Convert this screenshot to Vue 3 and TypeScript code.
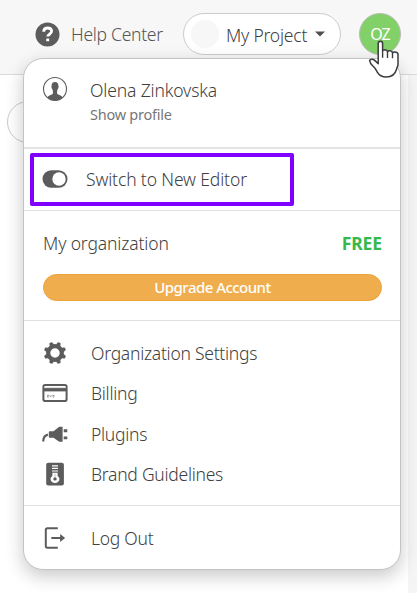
<script setup lang="ts">
interface MenuItem {
  id: string
  label: string
}

const items: MenuItem[] = [
  { id: 'settings', label: 'Organization Settings' },
  { id: 'billing', label: 'Billing' },
  { id: 'plugins', label: 'Plugins' },
  { id: 'brand', label: 'Brand Guidelines' },
]

const teeth: number[] = [22.5, 67.5, 112.5, 157.5, 202.5, 247.5, 292.5, 337.5]
</script>

<template>
  <div class="page">
    <header class="topbar">
      <a class="help">
        <svg width="25" height="25" viewBox="0 0 25 25">
          <circle cx="12.5" cy="12.5" r="12" fill="#5c5c5c" />
          <path d="M8.7 9.7C8.8 7.3 10.2 6 12.6 6c2.400 0 4 1.300 4 3.300 0 3-3.900 2.800-3.900 5.300" fill="none" stroke="#fff" stroke-width="2.800" />
          <rect x="11.200" y="16.500" width="3" height="2.800" rx=".6" fill="#fff" />
        </svg>
        <span class="help-text">Help Center</span>
      </a>
      <button class="project">
        <span class="dot"></span>
        <span class="project-text">My Project</span>
        <svg width="10" height="6" viewBox="0 0 10 6"><path d="M0 .5h10L5 5.500z" fill="#505050" /></svg>
      </button>
      <div class="avatar"><span>OZ</span></div>
    </header>

    <main class="content">
      <div class="search"></div>
      <div class="gutter"></div>
    </main>

    <section class="menu">
      <div class="profile">
        <svg class="icon" width="26" height="26" viewBox="0 0 26 26">
          <circle cx="13" cy="13" r="11.500" fill="#fff" stroke="#5c5c5c" stroke-width="1.100" />
          <path d="M13 6c2.300 0 3.500 1.500 3.400 3.900l.3.500-.5 2.200-.6.700-.5 2v2.300c.4 1.300 4.300 1.700 5.500 3.600-1.900 2.100-4.600 3.300-7.600 3.300s-5.700-1.200-7.600-3.300c1.200-1.900 5.100-2.300 5.500-3.600v-2.300l-.5-2-.6-.7-.5-2.200.3-.5C9.500 7.500 10.700 6 13 6z" fill="#5c5c5c" />
        </svg>
        <div class="who">
          <div class="name">Olena Zinkovska</div>
          <div class="show">Show profile</div>
        </div>
      </div>

      <div class="switch">
        <div class="highlight">
          <svg width="26" height="20" viewBox="0 0 26 20">
            <rect x=".5" y="1.200" width="25" height="17.600" rx="8.800" fill="#5c5c5c" />
            <circle cx="17" cy="10" r="6.700" fill="#fff" />
          </svg>
          <span class="switch-text">Switch to New Editor</span>
        </div>
      </div>

      <div class="org">
        <div class="org-row">
          <span class="org-name">My organization</span>
          <span class="plan">FREE</span>
        </div>
        <button class="upgrade"><span>Upgrade Account</span></button>
      </div>

      <nav class="list">
        <a v-for="item in items" :key="item.id" class="row">
          <svg v-if="item.id === 'settings'" class="icon" width="26" height="26" viewBox="-13 -13 26 26">
            <circle r="6.800" fill="none" stroke="#5c5c5c" stroke-width="4.200" />
            <path v-for="angle in teeth" :key="angle" d="M-2.400-8l.8-2.800q.1-.4.500-.4h2.200q.4 0 .5.400L2.400-8z" fill="#5c5c5c" :transform="`rotate(${angle})`" />
          </svg>
          <svg v-else-if="item.id === 'billing'" class="icon" width="26" height="26" viewBox="0 0 26 26">
            <rect x="1.400" y="4.900" width="23.200" height="16.200" rx="1.800" fill="#fff" stroke="#5c5c5c" stroke-width="2" />
            <path d="M2 8.100h22v3.300H2z" fill="#5c5c5c" />
            <path d="M2 7.500h22" stroke="#ddd" stroke-width=".9" />
            <path d="M5 15.300h1.700l-1.500 1.700h1.600M7.800 15.300l.6 1.600 1.100-1.600M10.400 15.300h1.800l-1.500 1.700h1.700" fill="none" stroke="#777" stroke-width=".7" />
          </svg>
          <svg v-else-if="item.id === 'plugins'" class="icon" width="26" height="26" viewBox="0 0 26 26">
            <path d="M1.200 20.500c.1-3.900 1.700-6.300 4.700-6.900" fill="none" stroke="#5c5c5c" stroke-width="2.200" />
            <path d="M6.800 11.300q0-1 1-1h3.700l5.700-4.500h3.400v15h-3.400l-5.700-4H7.800q-1 0-1-1z" fill="#5c5c5c" />
            <path d="M21.700 8.300h3.600v2.900h-3.600zM21.700 15.400h3.600v2.900h-3.600z" fill="#5c5c5c" />
          </svg>
          <svg v-else class="icon" width="26" height="26" viewBox="0 0 26 26">
            <rect x="4.200" y="1.800" width="17.700" height="22.600" rx="2" fill="#5c5c5c" />
            <path d="M10 4.800h6M10 7.400h6M10 10h6" stroke="#fff" stroke-width="1.200" />
            <path d="M10.400 11.700h5.200v3.200q2 1.200 1.900 3.200-.4 3.700-4.500 4-4.100-.3-4.500-4-.1-2 1.900-3.200z" fill="#fff" />
            <circle cx="13" cy="17.900" r="1.700" fill="#5c5c5c" />
            <path d="M13 12.500v4" stroke="#aaa" stroke-width=".7" />
          </svg>
          <span :class="['row-text', item.id]">{{ item.label }}</span>
        </a>
      </nav>

      <a class="logout">
        <svg class="icon" width="26" height="26" viewBox="0 0 26 26">
          <path d="M15.800 3.200H5.500q-1.700 0-1.700 1.700v16.200q0 1.700 1.700 1.700h10.300" fill="none" stroke="#5c5c5c" stroke-width="2" />
          <path d="M9.300 13h10" stroke="#5c5c5c" stroke-width="2" />
          <path d="M18.100 8.900l5 4.100-5 4.100z" fill="#5c5c5c" />
        </svg>
        <span class="row-text exit">Log Out</span>
      </a>
    </section>

    <svg class="cursor" width="32" height="38" viewBox="0 0 32 38">
      <path d="M10.200 3.500q0-2.300 2.200-2.300t2.200 2.300v7.300q.5-1.100 2.300-1.100 2.300.1 2.600 1.900.7-.9 2.500-.8 2.200.1 2.500 1.900.7-.8 2.300-.7 3.200.2 3.200 2.500v10c0 1.800-1.300 3.300-1.500 4.700-1.300 5-4.800 7.800-10.200 7.800-4.200 0-7.500-2.300-9.200-5.200-1.200-2-2-4.200-4.100-5.600-2-1.400-3-3.200-3.400-5.800 1.300-2.200 4-1 5.700.5l2.900 2.800z" fill="#fff" stroke="#3c3c3c" stroke-width="1.500" stroke-linejoin="round" />
      <path d="M14.600 10.300v7.400M19.500 11.300v6.600M24.500 12.300v6" stroke="#3c3c3c" stroke-width="1.400" />
    </svg>
  </div>
</template>

<style>
body {
  margin: 0;
  overflow: hidden;
}
</style>

<style scoped>
.page {
  position: relative;
  width: 417px;
  height: 593px;
  overflow: hidden;
  background: #fff;
  color: #404040;
  font-family: "Noto Sans", "Open Sans", sans-serif;
  font-weight: 300;
  font-size: 17.5px;
  line-height: 24px;
  white-space: nowrap;
}
.page svg {
  display: block;
  flex: none;
}
button {
  font: inherit;
  color: inherit;
  margin: 0;
  box-sizing: border-box;
}
.topbar {
  box-sizing: border-box;
  height: 75px;
  display: flex;
  align-items: flex-start;
  padding: 13px 16px 0 35px;
  background: #f7f7f7;
  border-bottom: 1px solid #dadada;
}
.help {
  display: flex;
  gap: 11px;
  width: 148px;
  padding-top: 9px;
  color: #555;
}
.help-text { letter-spacing: -0.28px; }
.project {
  display: flex;
  align-items: center;
  width: 158px;
  height: 42px;
  padding: 0 0 0 7px;
  border: 1px solid #ccc;
  border-radius: 21px;
  background: #fff;
}
.dot {
  width: 28px;
  height: 28px;
  margin-right: 7px;
  border-radius: 50%;
  background: #f7f7f7;
}
.project-text {
  width: 89px;
  text-align: left;
  padding-top: 2px;
  letter-spacing: -0.2px;
}
.avatar {
  box-sizing: border-box;
  width: 42px;
  height: 42px;
  margin-left: 18px;
  border: 1px solid #b8bdb6;
  border-radius: 50%;
  background: #82d168;
  color: #fff;
  font-size: 16px;
  font-weight: 400;
  line-height: 41px;
  text-align: center;
  letter-spacing: -0.9px;
}
.content {
  display: flex;
  justify-content: space-between;
  height: 518px;
}
.search {
  box-sizing: border-box;
  width: 120px;
  height: 42px;
  margin: 26px 0 0 7px;
  border: 1px solid #ccc;
  border-radius: 21px;
}
.gutter {
  width: 9px;
  background: #f5f5f5;
}
.menu {
  position: absolute;
  left: 23px;
  top: 58px;
  box-sizing: border-box;
  width: 378px;
  height: 512px;
  border: 1px solid #c4c4c4;
  border-radius: 20px;
  background: #fff;
  box-shadow: 0 6px 18px rgba(0, 0, 0, 0.22);
}
.profile {
  box-sizing: border-box;
  display: flex;
  gap: 22px;
  height: 90px;
  padding: 17px 18px 0;
  border-bottom: 2px solid #e4e4e4;
}
.who { padding-top: 2px; }
.name { letter-spacing: -0.15px; }
.show {
  font-size: 14.5px;
  color: #777;
  font-weight: 400;
  letter-spacing: -0.25px;
}
.switch {
  box-sizing: border-box;
  height: 62px;
  padding: 4px 0 0 6px;
  border-bottom: 1px solid #e0e0e0;
}
.highlight {
  box-sizing: border-box;
  display: flex;
  align-items: center;
  gap: 18px;
  width: 264px;
  height: 53px;
  padding: 0 0 2px 8px;
  border: 4px solid #8000ff;
  border-radius: 2px;
}
.switch-text { letter-spacing: -0.13px; }
.org {
  box-sizing: border-box;
  height: 110px;
  padding: 20px 18px 0 19px;
  border-bottom: 1px solid #e0e0e0;
}
.org-row {
  display: flex;
  justify-content: space-between;
}
.org-name { letter-spacing: -0.13px; }
.plan {
  color: #35b94a;
  font-weight: 700;
  letter-spacing: -0.1px;
}
.upgrade {
  display: block;
  width: 339px;
  height: 27px;
  margin-top: 19px;
  padding: 0;
  border: 1px solid #eca236;
  border-radius: 14px;
  background: #f0ad4e;
  color: #fff;
  font-size: 15px;
  font-weight: 500;
  line-height: 25px;
  letter-spacing: -0.53px;
}
.list {
  box-sizing: border-box;
  height: 185px;
  padding: 12px 18px 0;
  border-bottom: 1px solid #e0e0e0;
}
.row {
  display: flex;
  align-items: center;
  gap: 23px;
  height: 40.3px;
}
.row-text { letter-spacing: -0.26px; }
.logout {
  display: flex;
  align-items: center;
  gap: 23px;
  height: 64px;
  padding-left: 18px;
}
.exit { padding-bottom: 1px; }
.cursor {
  position: absolute;
  left: 368px;
  top: 40px;
}
</style>
